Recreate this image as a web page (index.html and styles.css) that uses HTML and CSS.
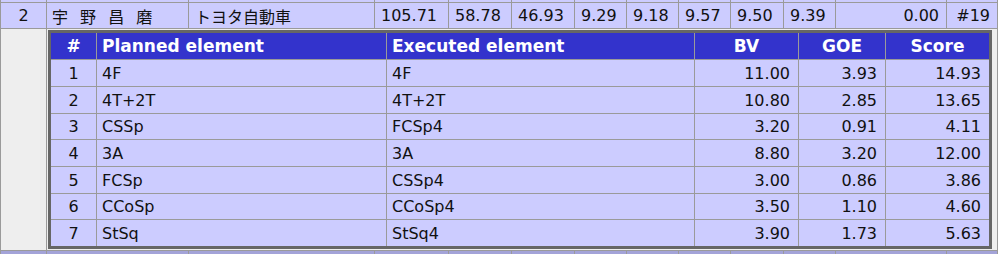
FILE: index.html
```html
<!DOCTYPE html>
<html lang="ja">
<head>
<meta charset="utf-8">
<title>Result</title>
<link rel="stylesheet" href="styles.css">
</head>
<body>
<div class="board">
  <div class="cell prev"></div><div class="cell prev"></div><div class="cell prev"></div><div class="cell prev"></div><div class="cell prev"></div><div class="cell prev"></div><div class="cell prev"></div><div class="cell prev"></div><div class="cell prev"></div><div class="cell prev"></div><div class="cell prev"></div><div class="cell prev"></div><div class="cell prev"></div>

  <div class="cell center">2</div>
  <div class="cell name">宇 野 昌 磨</div>
  <div class="cell">トヨタ自動車</div>
  <div class="cell">105.71</div>
  <div class="cell">58.78</div>
  <div class="cell">46.93</div>
  <div class="cell">9.29</div>
  <div class="cell">9.18</div>
  <div class="cell">9.57</div>
  <div class="cell">9.50</div>
  <div class="cell">9.39</div>
  <div class="cell right">0.00</div>
  <div class="cell right">#19</div>

  <div class="cell blank"></div>
  <div class="cell detail">
    <div class="elements">
      <div class="eh center">#</div>
      <div class="eh">Planned element</div>
      <div class="eh">Executed element</div>
      <div class="eh center">BV</div>
      <div class="eh center">GOE</div>
      <div class="eh center">Score</div>

      <div class="ec center">1</div><div class="ec">4F</div><div class="ec">4F</div><div class="ec num">11.00</div><div class="ec num">3.93</div><div class="ec num">14.93</div>
      <div class="ec center">2</div><div class="ec">4T+2T</div><div class="ec">4T+2T</div><div class="ec num">10.80</div><div class="ec num">2.85</div><div class="ec num">13.65</div>
      <div class="ec center">3</div><div class="ec">CSSp</div><div class="ec">FCSp4</div><div class="ec num">3.20</div><div class="ec num">0.91</div><div class="ec num">4.11</div>
      <div class="ec center">4</div><div class="ec">3A</div><div class="ec">3A</div><div class="ec num">8.80</div><div class="ec num">3.20</div><div class="ec num">12.00</div>
      <div class="ec center">5</div><div class="ec">FCSp</div><div class="ec">CSSp4</div><div class="ec num">3.00</div><div class="ec num">0.86</div><div class="ec num">3.86</div>
      <div class="ec center">6</div><div class="ec">CCoSp</div><div class="ec">CCoSp4</div><div class="ec num">3.50</div><div class="ec num">1.10</div><div class="ec num">4.60</div>
      <div class="ec center">7</div><div class="ec">StSq</div><div class="ec">StSq4</div><div class="ec num">3.90</div><div class="ec num">1.73</div><div class="ec num">5.63</div>
    </div>
  </div>

  <div class="cell next"></div><div class="cell next"></div><div class="cell next"></div><div class="cell next"></div><div class="cell next"></div><div class="cell next"></div><div class="cell next"></div><div class="cell next"></div><div class="cell next"></div><div class="cell next"></div><div class="cell next"></div><div class="cell next"></div><div class="cell next"></div>
</div>
</body>
</html>
```

FILE: styles.css
```css
html, body {
  margin: 0;
  padding: 0;
  background: #ffffff;
  overflow: hidden;
}

body {
  font-family: "DejaVu Sans", Verdana, sans-serif;
  font-size: 16px;
  color: #111111;
}

.board {
  display: grid;
  width: fit-content;
  grid-template-columns: 45px 141px 185px 73px 62px 62px 51px 51px 51px 52px 51px 110px 50px;
  grid-template-rows: 2px 25px 221px 3px;
  gap: 1px;
  padding: 0 1px;
  background: #9a9a9a;
}

.cell {
  background: #ccccff;
  display: flex;
  align-items: center;
  padding: 0 6px;
  white-space: nowrap;
  overflow: hidden;
  font-family: "DejaVu Sans", "Noto Sans CJK JP", sans-serif;
}

.cell.prev {
  padding: 0;
}

.cell.center {
  justify-content: center;
  padding: 0;
}

.cell.right {
  justify-content: flex-end;
  padding: 0 7px 0 0;
}

.cell.name {
  word-spacing: 7px;
  padding-left: 5px;
}

.cell.blank {
  background: #eeeeee;
}

.cell.next {
  background: #a3a3d8;
  padding: 0;
}

.cell.detail {
  grid-column: 2 / -1;
  background: #eeeeee;
  padding: 1px 5px 1px 1px;
  display: block;
}

.elements {
  display: grid;
  grid-template-columns: 45px 289px 307px 103px 86px 103px;
  grid-template-rows: 26px 26px 26px 25px 26px 26px 25px 26px;
  gap: 1px;
  background: #9a9a9a;
  border: 3px solid #666666;
}

.eh {
  background: #3333cc;
  color: #ffffff;
  font-weight: bold;
  font-size: 17px;
  display: flex;
  align-items: center;
  padding-left: 5px;
  white-space: nowrap;
}

.eh.center {
  justify-content: center;
  padding: 0;
}

.ec {
  background: #ccccff;
  display: flex;
  align-items: center;
  padding-left: 5px;
  white-space: nowrap;
}

.ec.center {
  justify-content: center;
  padding: 0;
}

.ec.num {
  justify-content: flex-end;
  padding: 0 8px 0 0;
}
```
